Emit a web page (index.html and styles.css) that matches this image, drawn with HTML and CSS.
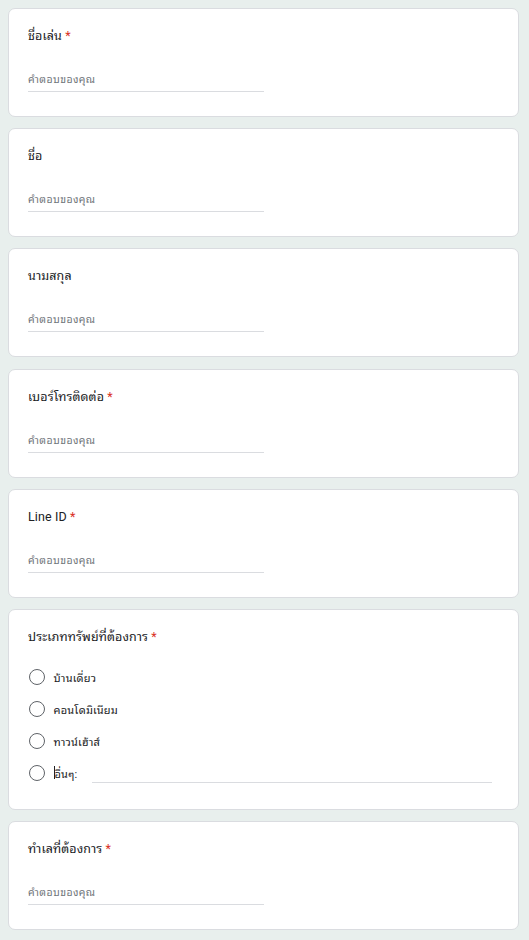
FILE: index.html
```html
<!DOCTYPE html>
<html lang="th">
<head>
<meta charset="utf-8">
<title>Form</title>
<link rel="stylesheet" href="styles.css">
</head>
<body>
<main class="form">
  <section class="card">
    <div class="title">ชื่อเล่น <span class="req">*</span></div>
    <div class="answer">คำตอบของคุณ</div>
  </section>
  <section class="card">
    <div class="title">ชื่อ</div>
    <div class="answer">คำตอบของคุณ</div>
  </section>
  <section class="card">
    <div class="title">นามสกุล</div>
    <div class="answer">คำตอบของคุณ</div>
  </section>
  <section class="card">
    <div class="title">เบอร์โทรติดต่อ <span class="req">*</span></div>
    <div class="answer">คำตอบของคุณ</div>
  </section>
  <section class="card">
    <div class="title">Line ID <span class="req">*</span></div>
    <div class="answer">คำตอบของคุณ</div>
  </section>
  <section class="card card-choice">
    <div class="title">ประเภททรัพย์ที่ต้องการ <span class="req">*</span></div>
    <div class="options">
      <div class="option"><span class="radio"></span><span class="opt-label">บ้านเดี่ยว</span></div>
      <div class="option"><span class="radio"></span><span class="opt-label">คอนโดมิเนียม</span></div>
      <div class="option"><span class="radio"></span><span class="opt-label">ทาวน์เฮ้าส์</span></div>
      <div class="option"><span class="radio"></span><span class="opt-label other"><span class="caret"></span>อื่นๆ:</span><span class="other-line"></span></div>
    </div>
  </section>
  <section class="card">
    <div class="title">ทำเลที่ต้องการ <span class="req">*</span></div>
    <div class="answer">คำตอบของคุณ</div>
  </section>
</main>
</body>
</html>
```

FILE: styles.css
```css
html, body {
  margin: 0;
  padding: 0;
}
body {
  background: #e8efed;
  font-family: Roboto, "Noto Sans Thai Looped", "Noto Sans Thai", sans-serif;
  color: #202124;
}
.form {
  display: flex;
  flex-direction: column;
  gap: 11.2px;
  padding: 8px 10px 8px 8px;
}
.card {
  background: #fff;
  border: 1px solid #dadce0;
  border-radius: 7px;
  padding: 19px 19px 24px 19px;
  height: 109px;
  box-sizing: border-box;
  flex: none;
}
.card-choice {
  height: 201px;
}
.title {
  font-size: 12.5px;
  font-weight: 380;
  line-height: 16px;
  height: 16px;
  letter-spacing: 0.1px;
}
.req {
  color: #d93025;
}
.answer {
  margin-top: 25px;
  width: 236px;
  height: 22px;
  line-height: 22px;
  font-size: 10.5px;
  font-weight: 370;
  color: #70757a;
  border-bottom: 1px solid #dadce0;
  letter-spacing: 0.4px;
}
.options {
  margin-top: 16px;
  display: flex;
  flex-direction: column;
}
.option {
  display: flex;
  align-items: center;
  height: 32px;
  position: relative;
}
.radio {
  width: 14px;
  height: 14px;
  margin-left: 0.5px;
  border: 1.3px solid #5f6368;
  border-radius: 50%;
  flex: none;
}
.opt-label {
  margin-left: 9px;
  font-size: 11px;
  font-weight: 370;
  letter-spacing: 0.2px;
}
.other {
  display: flex;
  align-items: center;
}
.caret {
  width: 1px;
  height: 13px;
  background: #202124;
}
.other-line {
  position: absolute;
  left: 64px;
  right: 7px;
  top: 25px;
  border-bottom: 1px solid #dadce0;
}
```
